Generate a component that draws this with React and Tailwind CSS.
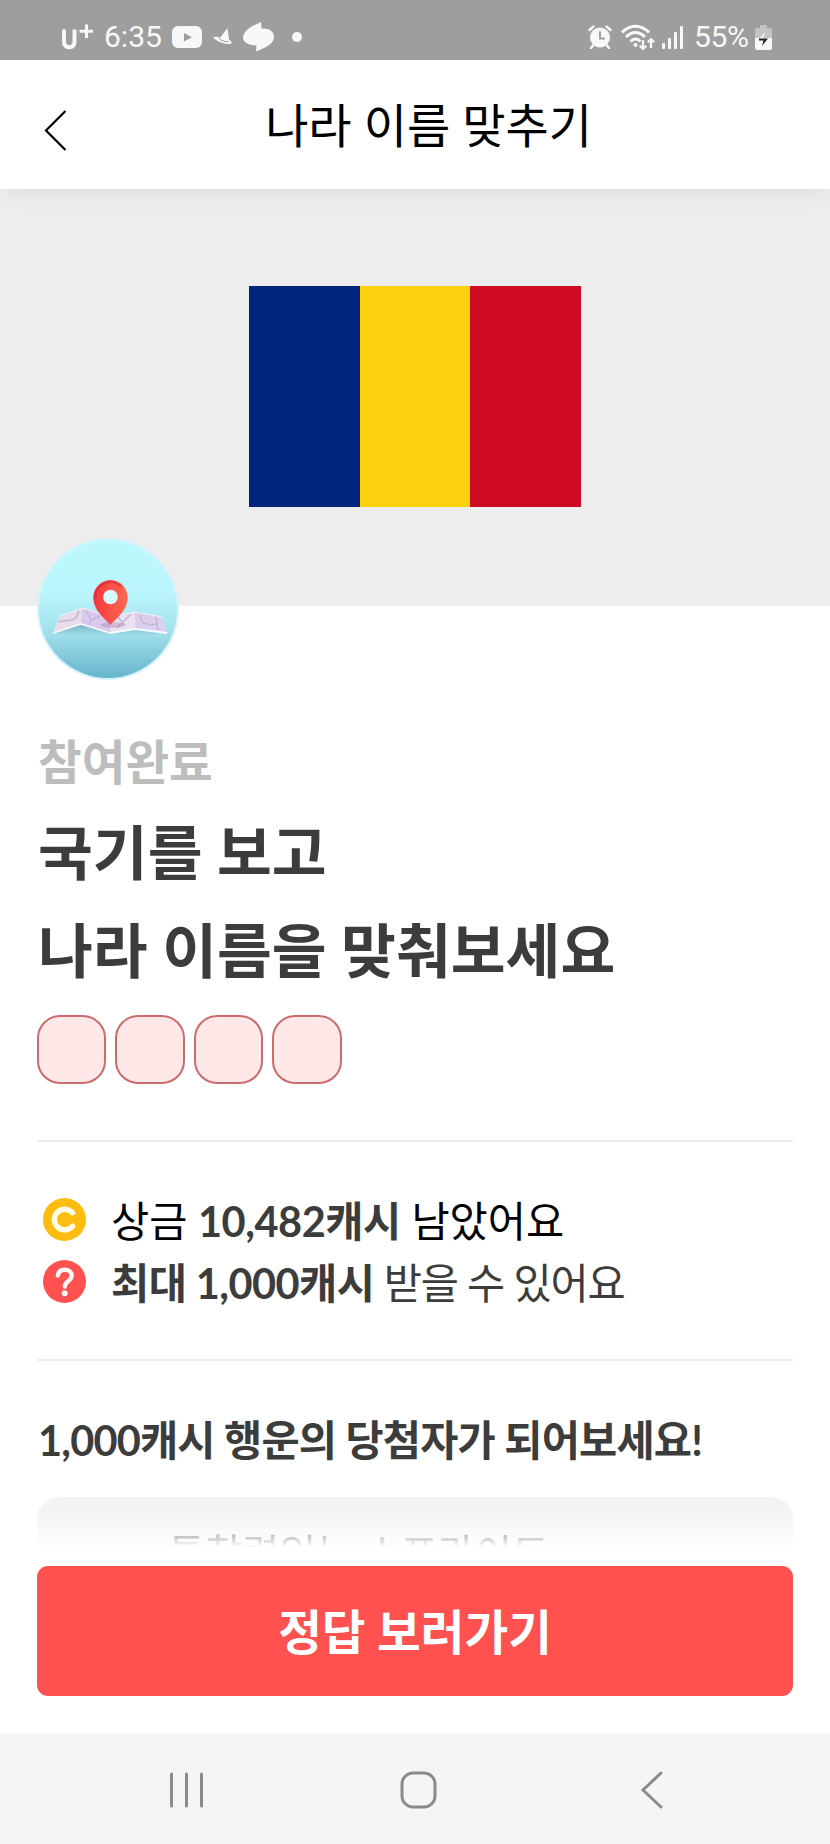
import { Fragment } from 'react';

const rewards = [
  {
    id: 'remaining',
    icon: <CoinIcon />,
    parts: [
      { text: '상금 ', style: 'text-black' },
      { text: '10,482캐시', style: 'font-bold tracking-[-0.45px]' },
      { text: ' 남았어요', style: 'text-black' },
    ],
  },
  {
    id: 'max',
    icon: <QuestionIcon />,
    parts: [
      { text: '최대 1,000캐시', style: 'font-bold tracking-[-0.55px]' },
      { text: ' 받을 수 있어요', style: 'tracking-[-1.2px]' },
    ],
  },
];

function CoinIcon() {
  return (
    <svg className="w-[43px] h-[43px]" viewBox="0 0 43 43" fill="none">
      <circle cx="21.5" cy="21.5" r="21.5" fill="#fdbd10" />
      <path d="M29.500 14.800a10.300 10.300 0 1 0 0 13.400" stroke="#fffbe6" strokeWidth="5.400" strokeLinecap="round" />
    </svg>
  );
}

function QuestionIcon() {
  return (
    <svg className="w-[43px] h-[43px]" viewBox="0 0 43 43" fill="none">
      <circle cx="21.5" cy="21.5" r="21.5" fill="#ff514f" />
      <path d="M14.800 15.500c.6-3.800 3.300-5.700 6.900-5.700 4.200 0 7 2.400 7 6 0 5.200-6.900 5.200-6.900 10.700" stroke="#fff5f2" strokeWidth="4.400" strokeLinecap="round" />
      <circle cx="21.700" cy="33.300" r="3" fill="#fff5f2" />
    </svg>
  );
}

function StatusBar() {
  return (
    <div className="h-[60px] shrink-0 bg-[#9e9e9e] flex items-center justify-between pl-[61px] pr-[58px] pt-[14px] text-[#f8f8f8] font-[Roboto]">
      <div className="flex items-center">
        <svg className="w-[32px] h-[28px]" viewBox="0 0 32 28" fill="none" stroke="#f8f8f8">
          <path d="M3 6.500v12c0 4 2 5.700 5.200 5.700s5.300-1.700 5.300-5.700v-12" strokeWidth="4" />
          <path d="M25.500 1.500v13.500M18.500 8.200h14" strokeWidth="3" />
        </svg>
        <span className="ml-[11px] w-[58px] text-[30px] leading-none">6:35</span>
        <svg className="ml-[10px] w-[30px] h-[22px]" viewBox="0 0 30 22">
          <rect width="30" height="22" rx="6" fill="#f8f8f8" />
          <path d="M12 7v8.500l8-4.200z" fill="#9e9e9e" />
        </svg>
        <svg className="ml-[11px] w-[20px] h-[18px]" viewBox="0 0 20 18" fill="#f8f8f8">
          <path d="M0 9.500c2-1 5-1 7 .2L14.500 0l1.500 11.800c1.800 1 3 2.400 2.700 3.800-4 1.400-14-.8-18.700-6.100z" />
          <path d="M6 10.500c2 2 6 3.400 9.500 3.300" stroke="#9e9e9e" strokeWidth="1" fill="none" />
        </svg>
        <svg className="ml-[10px] w-[31px] h-[30px]" viewBox="0 0 31 30" fill="#f8f8f8">
          <path d="M18 0l.500 6.500C26 6 31 9.500 31 14.500 31 22 23 25.500 13 29.500l.500-6C5 23.500 0 20 0 15.500 1 8 9 4 18 0z" />
        </svg>
        <span className="ml-[18px] size-[10px] rounded-full bg-[#f8f8f8]" />
      </div>
      <div className="flex items-center">
        <svg className="w-[24px] h-[24px]" viewBox="0 0 24 24" fill="none">
          <circle cx="12" cy="12.500" r="10" fill="#f8f8f8" />
          <path d="M1.500 5l4-3.500M22.500 5l-4-3.500M5 20.500l-2 2.500M19 20.500l2 2.500" stroke="#f8f8f8" strokeWidth="2.500" strokeLinecap="round" />
          <path d="M12 6.500v7h5" stroke="#9e9e9e" strokeWidth="2" />
        </svg>
        <svg className="ml-[9px] w-[35px] h-[27px]" viewBox="0 0 35 27" fill="none" stroke="#f8f8f8" strokeWidth="3">
          <path d="M1 8.500C9 0 20 0 28 8.500M5 13c6-6 13-6 19 0M9.500 17.500c3-3.200 7-3.200 10 0" />
          <circle cx="14.500" cy="21" r="2" fill="#f8f8f8" stroke="none" />
          <path d="M22 16v9M18.800 21.800L22 25l3.200-3.200M30 24v-9M26.800 18.200L30 15l3.200 3.200" strokeWidth="2.200" />
        </svg>
        <svg className="ml-[6px] w-[22px] h-[23px]" viewBox="0 0 22 23" fill="#f8f8f8">
          <rect x="0" y="17" width="3" height="6" rx="1" />
          <rect x="6" y="12" width="3" height="11" rx="1" />
          <rect x="12" y="6" width="3" height="17" rx="1" />
          <rect x="18" y="0" width="3" height="23" rx="1" />
        </svg>
        <span className="ml-[10px] w-[57px] text-[30px] leading-none tracking-[-0.3px]">55%</span>
        <svg className="ml-[4px] w-[17px] h-[25px]" viewBox="0 0 17 25">
          <path d="M5 0h7v3h3a2 2 0 0 1 2 2v9H0V5a2 2 0 0 1 2-2h3z" fill="#c4c4c4" />
          <path d="M0 13h17v10a2 2 0 0 1-2 2H2a2 2 0 0 1-2-2z" fill="#f8f8f8" />
          <path d="M10 7l-6 7h4z" fill="#f8f8f8" />
          <path d="M4 13.500h9L7 21l1.500-5.500H4z" fill="#222" />
        </svg>
      </div>
    </div>
  );
}

function MapBadge() {
  return (
    <svg className="w-[142px] h-[142px]" viewBox="0 0 142 142">
      <defs>
        <linearGradient id="sky" x1="0" y1="0" x2="0" y2="1">
          <stop offset="0" stopColor="#bdf8ff" />
          <stop offset=".4" stopColor="#bbf4fc" />
          <stop offset=".68" stopColor="#a0dfea" />
          <stop offset="1" stopColor="#66b5cc" />
        </linearGradient>
        <linearGradient id="pin" x1="0" y1="0" x2="1" y2="0">
          <stop offset="0" stopColor="#f2383f" />
          <stop offset="1" stopColor="#ff6a50" />
        </linearGradient>
        <linearGradient id="shade" x1="0" y1="0" x2="0" y2="1">
          <stop offset="0" stopColor="#5b8fa8" stopOpacity=".6" />
          <stop offset="1" stopColor="#5b8fa8" stopOpacity="0" />
        </linearGradient>
      </defs>
      <circle cx="71" cy="71" r="71" fill="#d5f3fa" />
      <circle cx="71" cy="71" r="69" fill="url(#sky)" />
      <path d="M18 95l25-9 30 9 25-5 30 5-20 3H32z" fill="url(#shade)" />
      <path d="M23 78l23-8-2 16-28 9z" fill="#e9dbec" />
      <path d="M46 70l27 8v17l-29-9z" fill="#d9caed" />
      <path d="M73 79l25-5v16l-25 5z" fill="#eae0f0" />
      <path d="M98 74l27 5 5 16-32-5z" fill="#dccfee" />
      <path d="M22 84c6-3 10 1 17-4l3-7M49 73l5 9 9-4M54 82l-2 5M80 78l8 9M94 76l-14 14M103 77c1 9 7 11 17 9M119 79l2 13" fill="none" stroke="#c3b5d6" strokeWidth="1.500" />
      <path d="M23 78l23-8 27 9 25-5 27 5" fill="none" stroke="#f6effa" strokeWidth="1" />
      <path d="M16 95l28-9 29 9 25-4 32 4" fill="none" stroke="#fff" strokeOpacity=".9" strokeWidth="1.800" strokeLinejoin="round" />
      <ellipse cx="76" cy="87" rx="12" ry="2.800" fill="#a06c98" opacity=".35" />
      <path d="M73.500 87C71 83 56.300 74 56.300 59.300a17.200 17.200 0 0 1 34.400 0C90.700 74 76 83 73.500 87z" fill="url(#pin)" />
      <path d="M58.500 60a15 15 0 0 1 25-12" fill="none" stroke="#cf2c38" strokeWidth="2.500" strokeLinecap="round" opacity=".6" />
      <circle cx="73.500" cy="59" r="7.300" fill="#d8f8fc" />
    </svg>
  );
}

export default function App() {
  return (
    <div className="h-[1844px] flex flex-col overflow-hidden bg-white text-[#3c3c3c] font-[Lato,'Noto_Sans_CJK_KR',sans-serif]">
      <StatusBar />

      <header className="relative z-10 h-[129px] shrink-0 flex items-center justify-center bg-white shadow-[0_10px_20px_-6px_rgba(0,0,0,0.07)]">
        <svg className="absolute left-[44px] top-[50px] w-[24px] h-[41px]" viewBox="0 0 24 41" fill="none">
          <path d="M21.500 1L2 20.500 21.500 40" stroke="#000" strokeWidth="2.200" />
        </svg>
        <h1 className="pl-[27px] text-[47px] leading-[60px] text-black">나라 이름 맞추기</h1>
      </header>

      {/* Flag */}
      <section className="h-[417px] shrink-0 bg-[#ededed] pt-[97px]">
        <div className="mx-auto w-[332px] h-[221px] grid grid-cols-3">
          <div className="bg-[#00257c]" />
          <div className="bg-[#fcd20f]" />
          <div className="bg-[#ce0a21]" />
        </div>
      </section>

      <main className="h-[941px] shrink-0 px-[37px]">
        <div className="relative -mt-[68px] h-[142px]">
          <MapBadge />
        </div>

        <p className="mt-[52px] pl-px text-[47.500px] leading-[60px] font-bold text-[#bdbdbd]">참여완료</p>
        <h2 className="mt-[11px] pl-px text-[59.600px] leading-[98px] font-bold">
          국기를 보고
          <br />
          나라 이름을 맞춰보세요
        </h2>

        {/* Answer slots */}
        <div className="mt-[16px] -ml-[0.5px] flex gap-[9px]">
          {[0, 1, 2, 3].map((n) => (
            <div key={n} className="w-[69.500px] h-[69px] rounded-[23px] border-2 border-[#cb6c6c] bg-[#ffe8e7]" />
          ))}
        </div>

        <div className="mt-[56px] h-[221px] border-y-2 border-[#ededed] pt-[48px]">
          {rewards.map((r) => (
            <div key={r.id} className="flex h-[62px] items-center pl-[6px]">
              <span className="-mt-[4px]">{r.icon}</span>
              <p className="ml-[25px] text-[41.500px] leading-[62px] whitespace-pre">
                {r.parts.map((part) => (
                  <Fragment key={part.text}>
                    <span className={part.style}>{part.text}</span>
                  </Fragment>
                ))}
              </p>
            </div>
          ))}
        </div>

        <h3 className="mt-[49px] pl-px text-[41.500px] leading-[60px] font-bold tracking-[-0.8px]">
          1,000캐시 행운의 당첨자가 되어보세요!
        </h3>

        {/* Winner list, fades out under the button */}
        <div className="relative mt-[27px] h-[50px] overflow-hidden rounded-t-[22px] bg-[#f3f3f3]">
          <p className="pl-[131px] pt-[26px] text-[40.300px] leading-[60px]">통찰력있는 스프라이트</p>
          <div className="absolute inset-x-0 bottom-0 h-[36px] bg-linear-to-b from-white/0 to-white" />
        </div>
      </main>

      <div className="h-[186px] shrink-0 bg-white px-[37px] pt-[19px]">
        <button className="w-full h-[130px] pt-[2px] rounded-[11px] bg-[#ff514f] text-[47.500px] font-bold leading-[60px] text-white">
          정답 보러가기
        </button>
      </div>

      <nav className="h-[111px] shrink-0 bg-[#f5f5f5] flex items-center pl-[169px] pt-[2px]">
        <svg className="w-[35px] h-[36px]" viewBox="0 0 35 36" stroke="#8b8b8b" strokeWidth="3" strokeLinecap="round">
          <path d="M2.500 2v32M17.500 2v32M32.500 2v32" />
        </svg>
        <svg className="ml-[196px] w-[37px] h-[38px]" viewBox="0 0 37 38" fill="none">
          <rect x="2" y="2" width="33" height="34" rx="11" stroke="#8b8b8b" strokeWidth="3" />
        </svg>
        <svg className="ml-[203px] w-[24px] h-[38px]" viewBox="0 0 24 38" fill="none" stroke="#8b8b8b" strokeWidth="3" strokeLinecap="round">
          <path d="M21 2L3 19l18 17" />
        </svg>
      </nav>
    </div>
  );
}
